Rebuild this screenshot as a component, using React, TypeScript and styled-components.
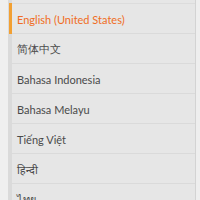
import React from "react";
import styled, { createGlobalStyle } from "styled-components";

const Global = createGlobalStyle`
  html, body { margin: 0; padding: 0; background: #eeeeee; }
  body { font-family: Lato, "Open Sans", "Noto Sans", sans-serif; }
`;

const Page = styled.div`
  display: flex;
  width: 200px;
  height: 200px;
  overflow: hidden;
  background: #eeeeee;
`;

const Gutter = styled.div`
  width: 8px;
  flex: none;
  background: #efefef;
`;

const Panel = styled.div`
  width: 183px;
  flex: none;
  background: #e6e6e6;
  border-left: 4px solid #dadada;
  border-right: 1px solid #d3d3d3;
  padding-top: 3px;
`;

const List = styled.ul`
  list-style: none;
  margin: 0;
  padding: 0;
  border-top: 1px solid #dcdcdc;
`;

const Item = styled.li<{ $active?: boolean }>`
  position: relative;
  height: 30px;
  display: flex;
  align-items: center;
  padding-left: 5px;
  padding-top: 2px;
  box-sizing: border-box;
  border-bottom: 1px solid #dadada;
  font-size: 11px;
  color: ${(p) => (p.$active ? "#f06d24" : "#4a4a4a")};
  white-space: nowrap;

  &::before {
    content: "";
    display: ${(p) => (p.$active ? "block" : "none")};
    position: absolute;
    left: -3px;
    top: -1px;
    bottom: -1px;
    width: 3px;
    background: #f2a033;
  }
`;

const languages = [
  "English (United States)",
  "简体中文",
  "Bahasa Indonesia",
  "Bahasa Melayu",
  "Tiếng Việt",
  "हिन्दी",
  "ไทย",
];

export default function App() {
  return (
    <Page>
      <Global />
      <Gutter />
      <Panel>
        <List>
          {languages.map((l, i) => (
            <Item key={l} $active={i === 0}>
              {l}
            </Item>
          ))}
        </List>
      </Panel>
    </Page>
  );
}
